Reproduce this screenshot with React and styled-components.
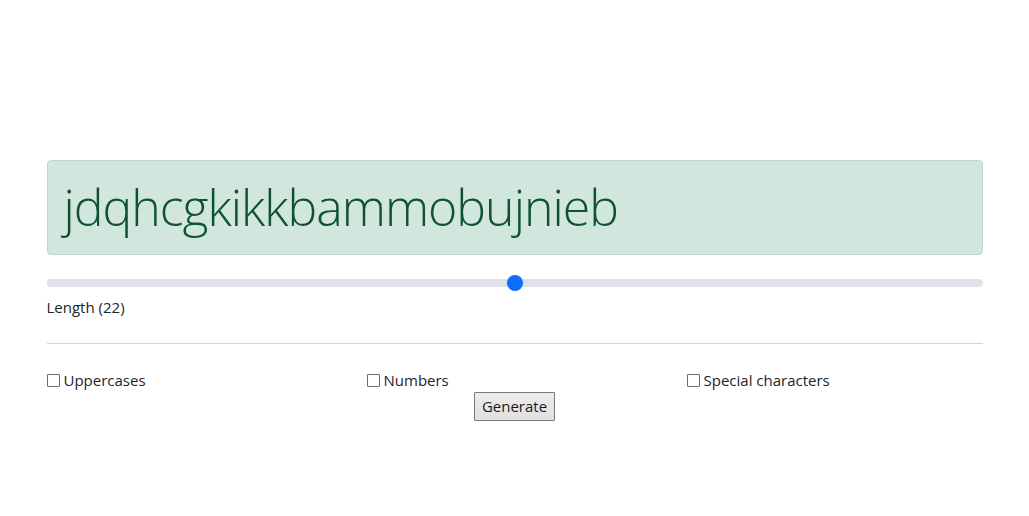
import React, { useState } from 'react';
import styled, { createGlobalStyle } from 'styled-components';

const GlobalStyle = createGlobalStyle`
  *, *::before, *::after {
    box-sizing: border-box;
  }

  body {
    margin: 0;
    background: #fff;
    color: #212529;
    font-family: "Open Sans", "Noto Sans", sans-serif;
    font-size: 15px;
    line-height: 24px;
  }
`;

const Container = styled.div`
  width: 960px;
  margin: 0 auto;
  padding: 160px 12px 40px;
`;

const PasswordBox = styled.div`
  background-color: #d1e7dd;
  border: 1px solid #badbcc;
  border-radius: 4px;
  color: #0f5132;
  padding: 15px 16px;
  margin-bottom: 16px;
  font-size: 50px;
  font-weight: 300;
  line-height: 63px;
  letter-spacing: -1px;
  white-space: nowrap;
  overflow: hidden;
`;

const Range = styled.input`
  display: block;
  width: 100%;
  height: 24px;
  margin: 0;
  padding: 0;
  background: transparent;
  appearance: none;

  &::-webkit-slider-runnable-track {
    height: 8px;
    background: #dee2e6;
    border-radius: 16px;
  }

  &::-webkit-slider-thumb {
    appearance: none;
    width: 16px;
    height: 16px;
    margin-top: -4px;
    border: 0;
    border-radius: 50%;
    background: #0d6efd;
  }
`;

const Label = styled.label`
  display: inline-block;
  margin-bottom: 8px;
`;

const Divider = styled.hr`
  margin: 16px 0 24px;
  border: 0;
  border-top: 1px solid #d3d3d3;
`;

const Options = styled.div`
  display: grid;
  grid-template-columns: repeat(3, 1fr);
  column-gap: 24px;
`;

const Option = styled.label`
  display: flex;
  align-items: center;
`;

const Check = styled.input`
  width: 13px;
  height: 13px;
  margin: 0 4px 0 0;
  appearance: none;
  border: 1px solid #6b6b6b;
  border-radius: 1px;
  background: #fff;
`;

const Actions = styled.div`
  text-align: center;
`;

const Button = styled.button`
  font: inherit;
  color: #1a1a1a;
  line-height: 25px;
  padding: 1px 7px;
  background: linear-gradient(#ececec, #e1e1e1);
  border: 1px solid #7a7a7a;
  border-radius: 1px;
`;

const randomPassword = (length) => {
  const letters = 'abcdefghijklmnopqrstuvwxyz';
  let out = '';
  for (let i = 0; i < length; i++) {
    out += letters[Math.floor(Math.random() * letters.length)];
  }
  return out;
};

const App = () => {
  const [length, setLength] = useState(22);
  const [password, setPassword] = useState('jdqhcgkikkbammobujnieb');

  return (
    <Container>
      <GlobalStyle />
      <PasswordBox>{password}</PasswordBox>
      <Range
        type="range"
        min={4}
        max={40}
        value={length}
        onChange={(e) => setLength(Number(e.target.value))}
      />
      <Label>Length ({length})</Label>
      <Divider />
      <Options>
        <Option>
          <Check type="checkbox" />
          Uppercases
        </Option>
        <Option>
          <Check type="checkbox" />
          Numbers
        </Option>
        <Option>
          <Check type="checkbox" />
          Special characters
        </Option>
      </Options>
      <Actions>
        <Button onClick={() => setPassword(randomPassword(length))}>Generate</Button>
      </Actions>
    </Container>
  );
};

export default App;
